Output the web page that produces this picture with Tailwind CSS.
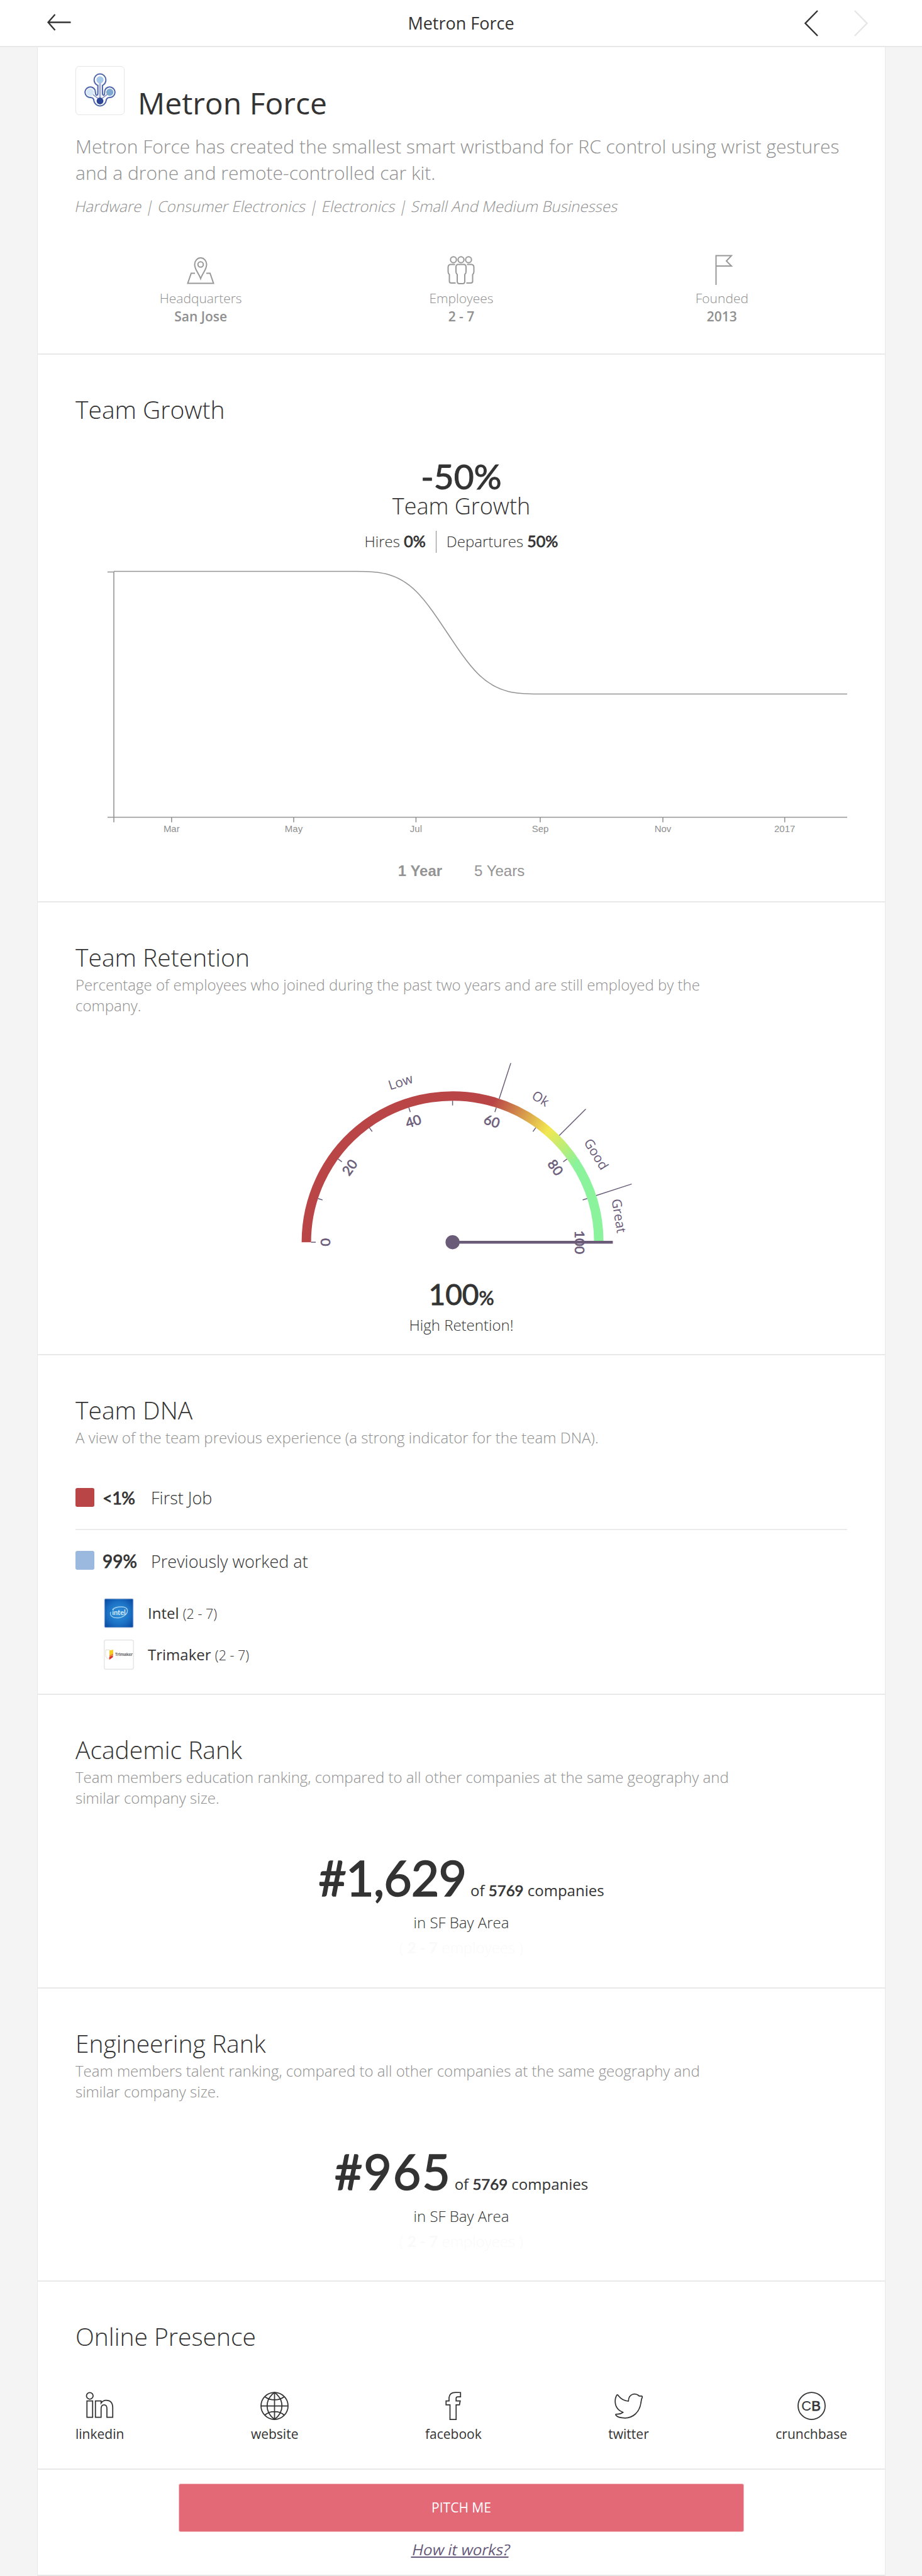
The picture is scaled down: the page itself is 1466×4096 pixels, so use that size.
<!DOCTYPE html>
<html lang="en">
<head>
<meta charset="utf-8">
<title>Metron Force</title>
<script src="https://cdn.jsdelivr.net/npm/@tailwindcss/browser@4"></script>
</head>
<body class="bg-[#f4f4f4] font-['Open_Sans',sans-serif] text-[#333] w-[1466px]">
<header class="h-[75px] bg-white border-b-2 border-[#e8e8e8] grid grid-cols-3 items-center pl-[75px] pr-[86px]">
  <svg class="w-[38px] h-[27px] -mt-0.5" viewBox="0 0 38 27" fill="none" stroke="#333" stroke-width="2.4"><path d="M12.5 1 1.500 13.500 12.500 26M1.500 13.500H37.500"/></svg>
  <div class="text-center text-[27px] leading-[73px] pl-[11px] whitespace-nowrap">Metron Force</div>
  <div class="flex justify-end gap-[57px]">
    <svg class="w-[22px] h-[42px]" viewBox="0 0 22 42" fill="none" stroke="#333" stroke-width="2.4"><path d="M21 1 1.500 21 21 41"/></svg>
    <svg class="w-[22px] h-[42px]" viewBox="0 0 22 42" fill="none" stroke="#e6e6e6" stroke-width="2.4"><path d="M1 1 20.500 21 1 41"/></svg>
  </div>
</header>
<main class="ml-[59px] w-[1349px] bg-white border-x border-[#e8e8e8]">
  <section class="h-[489px] border-b-2 border-[#e9e9e9] px-[60px] pt-[30px]">
    <div class="flex gap-[21px]">
      <div class="w-[78px] h-[78px] border-[1.5px] border-[#e6e6e6] rounded-[6px] flex items-center justify-center">
        <svg class="w-[76px] h-[76px]" viewBox="62 62 308 308" fill="none">
          <path stroke="#4d66ab" stroke-width="8" fill="#fff" d="M202 183C186 175 178 162 178 147A38 38 0 0 1 254 147C254 162 246 175 232 183V232Q232 246 240 246C248 246 244 230 248 212A34 34 0 1 1 279 261C262 261 256 268 255 284A40 40 0 0 1 177 284C177 268 168 261 153 261A34 34 0 1 1 184 212C188 230 186 246 194 246Q202 246 202 232Z"/>
          <path d="M216 165V270" stroke="#a9b2d6" stroke-width="13"/><path d="M168 240 205 268M264 240 227 268" stroke="#8592c3" stroke-width="6"/>
          <circle cx="216" cy="147" r="23" fill="#a6c9ea"/><circle cx="153" cy="227" r="24" fill="#d7e6f6"/><circle cx="279" cy="227" r="23" fill="#7da9d0"/><circle cx="216" cy="283" r="22" fill="#2c4695"/>
        </svg>
      </div>
      <h1 class="mt-[27px] text-[48px] leading-[64px]">Metron Force</h1>
    </div>
    <p class="mt-4 text-[30px] leading-[42px] font-light text-[#8f8f8f]">Metron Force has created the smallest smart wristband for RC control using wrist gestures<br>and a drone and remote-controlled car kit.</p>
    <p class="mt-3.5 w-fit text-[24px] leading-[36px] font-light -skew-x-12 text-[#8f8f8f]">Hardware | Consumer Electronics | Electronics | Small And Medium Businesses</p>
    <div class="mt-[59px] -mx-2 grid grid-cols-3 text-center text-[21px] leading-[29px] font-light text-[#8f8f8f]">
      <div>
        <svg class="mx-auto w-[48px] h-[48px] mb-[7px]" viewBox="0 0 48 48" fill="none" stroke="#999" stroke-width="2"><path d="M24 38C21 29 14.500 24 14.500 15.500A9.500 10.500 0 0 1 33.500 15.500C33.500 24 27 29 24 38Z"/><circle cx="24" cy="15.500" r="4.300"/><path d="M15 29.500H9L3.500 45.500H44.500L39 29.500H33"/></svg>
        <div>Headquarters</div><div class="font-semibold">San Jose</div>
      </div>
      <div>
        <svg class="mx-auto w-[48px] h-[48px] mb-[7px]" viewBox="0 0 48 48" fill="none" stroke="#999" stroke-width="2"><circle cx="12" cy="8" r="4.700"/><circle cx="24" cy="8" r="4.700"/><circle cx="36" cy="8" r="4.700"/><path d="M19 15.500H29Q32 16 32 20V27Q32 30 30 31.500V42Q30 46 27 46H21Q18 46 18 42V31.500Q16 30 16 27V20Q16 16 19 15.500Z"/><path d="M14.500 15.500H7.500Q3.500 16 3.500 20V27Q3.500 30 5.500 31.500V42Q5.500 45 8.500 45H15.500M33.500 15.500H40.500Q44.500 16 44.500 20V27Q44.500 30 42.500 31.500V42Q42.500 45 39.500 45H32.500"/></svg>
        <div>Employees</div><div class="font-semibold">2 - 7</div>
      </div>
      <div>
        <svg class="mx-auto w-[48px] h-[48px] mb-[7px]" viewBox="0 0 48 48" fill="none" stroke="#999" stroke-width="2"><path d="M14.500 48V1.500H39L31 10 39 18H14.500"/></svg>
        <div>Founded</div><div class="font-semibold">2013</div>
      </div>
    </div>
  </section>

  <section class="h-[871px] border-b-2 border-[#e9e9e9] px-[60px] pt-[60px]">
    <h2 class="text-[39px] leading-[54px] font-light">Team Growth</h2>
    <div class="mt-[52px] text-center font-['Lato',sans-serif] [-webkit-text-stroke:1px_#333] text-[55px] leading-[54px]">-50%</div>
    <div class="mt-px text-center text-[36px] leading-[40px] font-light">Team Growth</div>
    <div class="mt-[19px] h-[35px] flex justify-center text-[24px] leading-[33px] font-light">
      <div class="pr-4">Hires <span class="font-['Lato',sans-serif] font-normal [-webkit-text-stroke:0.8px_#333] text-[25px] leading-none">0%</span></div>
      <div class="border-l border-[#888] pl-4">Departures <span class="font-['Lato',sans-serif] font-normal [-webkit-text-stroke:0.8px_#333] text-[25px] leading-none">50%</span></div>
    </div>
    <svg class="mt-[25px] block w-[1228px] h-[432px]" viewBox="120 904 1228 432" fill="none" stroke="#949494" stroke-width="1.600">
      <path d="M171 909.500H181V1307.500M171 1299.500H1347"/>
      <path d="M181 908.500H565.200C597.600 908.500 630 908.500 662.400 941C694.800 973.500 727.200 1038.500 759.600 1071C792 1103.500 824.400 1103.500 856.800 1103.500H1347"/>
      <path d="M272.800 1299V1307.500M467 1299V1307.500M661.400 1299V1307.500M859 1299V1307.500M1054 1299V1307.500M1247.700 1299V1307.500"/>
      <g class="font-['Liberation_Sans',sans-serif] text-[15px]" fill="#8f8f8f" stroke="none" text-anchor="middle">
        <text x="272.800" y="1323">Mar</text><text x="467" y="1323">May</text><text x="661.400" y="1323">Jul</text><text x="859" y="1323">Sep</text><text x="1054" y="1323">Nov</text><text x="1247.700" y="1323">2017</text>
      </g>
    </svg>
    <div class="mt-[31px] flex justify-center gap-[51px] font-['Liberation_Sans',sans-serif] text-[24px] leading-[36px] text-[#949494]"><span class="font-bold">1 Year</span><span>5 Years</span></div>
  </section>

  <section class="h-[720px] border-b-2 border-[#e9e9e9] px-[60px] pt-[60px]">
    <h2 class="text-[39px] leading-[54px] font-light">Team Retention</h2>
    <p class="text-[24px] leading-[33px] font-light text-[#8f8f8f]">Percentage of employees who joined during the past two years and are still employed by the<br>company.</p>
    <svg class="mt-[60px] mx-auto block w-[620px] h-[330px]" viewBox="-295.600 -300.200 620 330">
      <defs>
        <linearGradient id="g1" gradientUnits="userSpaceOnUse" x1="64.900" y1="-223.300" x2="151" y2="-176.800"><stop offset="0" stop-color="#b94547"/><stop offset="1" stop-color="#f2e750"/></linearGradient>
        <linearGradient id="g2" gradientUnits="userSpaceOnUse" x1="151" y1="-176.800" x2="196.300" y2="-124.600"><stop offset="0" stop-color="#f2e750"/><stop offset="1" stop-color="#8af39b"/></linearGradient>
      </defs>
      <g fill="none" stroke-width="15">
        <path stroke="#8af39b" d="M194 -128A232.500 232.500 0 0 1 232.500 0"/>
        <path stroke="#b94547" d="M-232.500 0A232.500 232.500 0 0 1 66 -222.900"/>
        <path stroke="url(#g1)" d="M64.900 -223.300A232.500 232.500 0 0 1 151.400 -176.500"/>
        <path stroke="url(#g2)" d="M151 -176.800A232.500 232.500 0 0 1 196.300 -124.600"/>
      </g>
      <g id="ticks" stroke="#6a5c79" stroke-width="1.500"></g>
      <g id="values" fill="#6a5c79" stroke="#6a5c79" stroke-width=".6" text-anchor="middle" class="font-['Lato',sans-serif] text-[21.500px]"></g>
      <g id="labels" fill="#6a5c79" text-anchor="middle" class="text-[21px]"></g>
      <path d="M0 0H254.800" stroke="#6a5c79" stroke-width="4.500"/><circle r="11.200" fill="#6a5c79"/>
    </svg>
    <div class="mt-[26px] h-[54px] text-center font-['Lato',sans-serif] [-webkit-text-stroke:0.9px_#333] text-[46px] leading-[54px]">100<span class="text-[30px] leading-none">%</span></div>
    <div class="mt-1 text-center text-[24px] leading-[36px] font-light">High Retention!</div>
  </section>

  <section class="h-[540px] border-b-2 border-[#e9e9e9] px-[60px] pt-[60px]">
    <h2 class="text-[39px] leading-[54px] font-light">Team DNA</h2>
    <p class="text-[24px] leading-[33px] font-light text-[#8f8f8f]">A view of the team previous experience (a strong indicator for the team DNA).</p>
    <div class="mt-16 flex text-[27px] leading-[32px] h-[30px]">
      <div class="w-[30px] h-[30px] rounded-[3px] bg-[#b94547]"></div>
      <div class="w-[77px] ml-[13px] font-['Lato',sans-serif] [-webkit-text-stroke:0.8px_#333] tracking-[-0.5px]">&lt;1%</div>
      <div class="font-light">First Job</div>
    </div>
    <div class="mt-[35px] h-0.5 bg-[#ebebeb]"></div>
    <div class="mt-[33px] flex text-[27px] leading-[33px] h-[30px]">
      <div class="w-[30px] h-[30px] rounded-[3px] bg-[#9bb9df]"></div>
      <div class="w-[77px] ml-[13px] font-['Lato',sans-serif] [-webkit-text-stroke:0.8px_#333] text-[28px]">99%</div>
      <div class="font-light">Previously worked at</div>
    </div>
    <div class="mt-[45px] ml-[45px] flex h-[48px] text-[24px] leading-[48px]">
      <svg class="w-[48px] h-[48px] mr-[22px] shrink-0" viewBox="0 0 48 48"><defs><radialGradient id="ib" r=".68"><stop offset="0" stop-color="#3191dc"/><stop offset=".55" stop-color="#1c72c4"/><stop offset="1" stop-color="#0646a0"/></radialGradient></defs><rect x=".75" y=".75" width="46.500" height="46.500" rx="2" fill="url(#ib)" stroke="#e1e6ee" stroke-width="1.500"/><path d="M14 18C20 13 36 12 37.500 19C38.500 25 31 31 23 31.500C14 32 9 28 11 22" fill="none" stroke="#9fd0f3" stroke-width="1.400"/><text x="24" y="26.500" text-anchor="middle" fill="#d6ecfb" class="font-['Lato',sans-serif] font-bold text-[11px]">intel</text></svg>
      <div>Intel <span class="font-light text-[21.500px]">(2 - 7)</span></div>
    </div>
    <div class="mt-[18px] ml-[45px] flex h-[48px] text-[24px] leading-[48px]">
      <svg class="w-[48px] h-[48px] mr-[22px] shrink-0" viewBox="0 0 48 48"><rect x=".75" y=".75" width="46.500" height="46.500" rx="3" fill="#fff" stroke="#e6e6e6" stroke-width="1.500"/><path d="M3 16.500H10V29L9 31Q3 30 3 25Z" fill="#fff" stroke="#ddd5bd" stroke-width=".8"/><path d="M9 17.500 15 16V22L9 25Z" fill="#f5cf20"/><path d="M9 25 15 22V24.500L9 28Z" fill="#f08a24"/><path d="M8.500 28 14.500 25V28L9 32Z" fill="#d8322c"/><text x="18" y="26" fill="#666" textLength="28" class="font-bold text-[6.500px]">Trimaker</text></svg>
      <div>Trimaker <span class="font-light text-[21.500px]">(2 - 7)</span></div>
    </div>
  </section>

  <section class="h-[467px] border-b-2 border-[#e9e9e9] px-[60px] pt-[60px]">
    <h2 class="text-[39px] leading-[54px] font-light">Academic Rank</h2>
    <p class="text-[24px] leading-[33px] font-light text-[#8f8f8f]">Team members education ranking, compared to all other companies at the same geography and<br>similar company size.</p>
    <div class="mt-[71px] h-[79px] flex items-baseline justify-center gap-[7px] text-[24px] leading-[78px]"><span class="font-['Lato',sans-serif] [-webkit-text-stroke:1.6px_#333] text-[77px] tracking-[-1px]">#1,629</span><span>of <span class="font-['Lato',sans-serif] [-webkit-text-stroke:0.7px_#333]">5769</span> companies</span></div>
    <div class="mt-3.5 text-center text-[24px] leading-[36px] font-light">in SF Bay Area</div>
    <div class="mt-1 text-center text-[24px] leading-[36px] font-light text-[#fafafa]">( <b class="font-['Lato',sans-serif] font-bold">2 - 7</b> employees )</div>
  </section>

  <section class="h-[466px] border-b-2 border-[#e9e9e9] px-[60px] pt-[60px]">
    <h2 class="text-[39px] leading-[54px] font-light">Engineering Rank</h2>
    <p class="text-[24px] leading-[33px] font-light text-[#8f8f8f]">Team members talent ranking, compared to all other companies at the same geography and<br>similar company size.</p>
    <div class="mt-[71px] h-[79px] flex items-baseline justify-center gap-[5px] text-[24px] leading-[78px]"><span class="font-['Lato',sans-serif] [-webkit-text-stroke:1.6px_#333] text-[77px] tracking-[1.8px]">#965</span><span>of <span class="font-['Lato',sans-serif] [-webkit-text-stroke:0.7px_#333]">5769</span> companies</span></div>
    <div class="mt-3.5 text-center text-[24px] leading-[36px] font-light">in SF Bay Area</div>
    <div class="mt-1 text-center text-[24px] leading-[36px] font-light text-[#fafafa]">( <b class="font-['Lato',sans-serif] font-bold">2 - 7</b> employees )</div>
  </section>

  <section class="h-[299px] border-b-2 border-[#e9e9e9] px-[60px] pt-[60px]">
    <h2 class="text-[39px] leading-[54px] font-light">Online Presence</h2>
    <div class="mt-[61px] flex justify-between text-[21px] leading-[30px]">
      <div><svg class="mx-auto w-[45px] h-[45px] mb-[7px]" viewBox="0 0 180 180" fill="none" stroke="#333" stroke-width="7"><circle cx="27" cy="26" r="21"/><path d="M9 58H45V162H9ZM63 58H99V72C106 62 116 54 130 54C160 54 173 74 173 102V162H136V108C136 92 131 83 118 83C106 83 99 92 99 108V162H63Z"/></svg>linkedin</div>
      <div><svg class="mx-auto w-[45px] h-[45px] mb-[7px]" viewBox="0 0 180 180" fill="none" stroke="#333" stroke-width="7"><circle cx="90" cy="90" r="86"/><path d="M90 4V176M4 90H176M90 4C27 52 27 128 90 176M90 4C153 52 153 128 90 176M29 32C60 58 120 58 151 32M29 148C60 119 120 119 151 148"/></svg>website</div>
      <div><svg class="mx-auto w-[45px] h-[45px] mb-[7px]" viewBox="0 0 180 180" fill="none" stroke="#333" stroke-width="7"><path d="M137 5V32H118Q109 32 109 42V58H135L130 83H109V176H70V83H45V58H64V42Q64 4 105 4Z"/></svg>facebook</div>
      <div><svg class="mx-auto w-[45px] h-[45px] mb-[7px]" viewBox="0 0 180 180" fill="none" stroke="#333" stroke-width="7" stroke-linejoin="round"><path d="M22 21C38 44 60 58 89 60C88 24 120 4 148 20L157 27H173Q179 28 176 38C170 48 171 56 168 72C160 132 115 167 68 167C42 167 18 162 9 149C6 143 11 142 17 142C32 143 44 139 55 131C18 117 2 88 5 52C6 38 10 30 15 22Q18 17 22 21Z"/></svg>twitter</div>
      <div><svg class="mx-auto w-[45px] h-[45px] mb-[7px]" viewBox="0 0 180 180"><circle cx="90" cy="90" r="86" fill="none" stroke="#333" stroke-width="7"/><g fill="#333" class="font-['Liberation_Sans',sans-serif] text-[88px]"><text x="25" y="121">C</text><text x="89" y="121" stroke="#333" stroke-width="3">B</text></g></svg>crunchbase</div>
    </div>
  </section>

  <footer class="h-[169px] border-b-2 border-[#e6e6e6] pt-[22px] text-center">
    <button class="block mx-auto w-[899px] h-[77px] rounded-[3px] bg-[#e36977] border border-[#f3b9bf] text-white text-[21px]">PITCH ME</button>
    <a class="mt-2.5 inline-block text-[24px] leading-[36px] -skew-x-12 text-[#655878] underline">How it works?</a>
  </footer>
</main>
<script>
  const NS = 'http://www.w3.org/2000/svg';
  const add = (id, tag, attrs, text) => {
    const e = document.createElementNS(NS, tag);
    for (const k in attrs) e.setAttribute(k, attrs[k]);
    if (text) e.textContent = text;
    document.getElementById(id).appendChild(e);
  };
  const turn = v => `rotate(${-90 + 1.8 * v})`;
  for (let v = 0; v <= 100; v += 10) add('ticks', 'line', { x1: 0, x2: 0, y1: -225, y2: -217.5, transform: turn(v) });
  for (const v of [60, 75, 90]) add('ticks', 'line', { x1: 0, x2: 0, y1: -240, y2: -299.5, transform: turn(v) });
  for (let v = 0; v <= 100; v += 20) add('values', 'text', { x: 0, y: -194.5, transform: turn(v) }, String(v));
  for (const [v, t] of [[40, 'Low'], [67.5, 'Ok'], [82.5, 'Good'], [95, 'Great']]) add('labels', 'text', { x: 0, y: -260.5, transform: turn(v) }, t);
</script>
</body>
</html>
